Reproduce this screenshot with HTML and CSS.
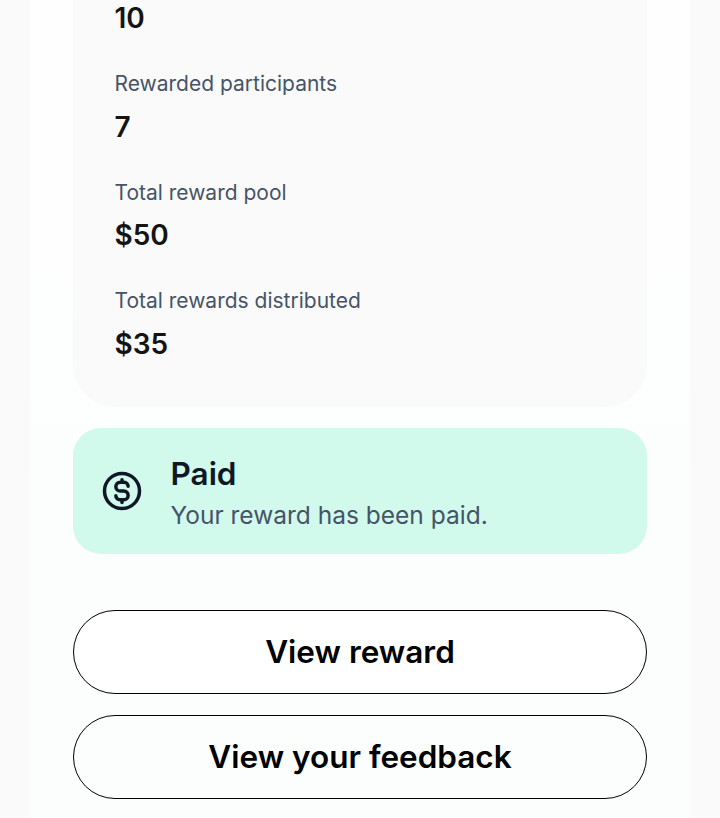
FILE: index.html
```html
<!DOCTYPE html>
<html lang="en">
<head>
  <meta charset="UTF-8">
  <meta name="viewport" content="width=device-width, initial-scale=1">
  <title>Reward</title>
  <link rel="stylesheet" href="styles.css">
</head>
<body>
  <main class="page">
    <section class="summary">
      <div class="stat">
        <strong class="stat-value">10</strong>
      </div>
      <div class="stat">
        <span class="stat-label">Rewarded participants</span>
        <strong class="stat-value">7</strong>
      </div>
      <div class="stat">
        <span class="stat-label">Total reward pool</span>
        <strong class="stat-value">$50</strong>
      </div>
      <div class="stat">
        <span class="stat-label">Total rewards distributed</span>
        <strong class="stat-value">$35</strong>
      </div>
    </section>

    <section class="notice">
      <svg class="notice-icon" viewBox="0 0 24 24" fill="none" stroke="currentColor" stroke-width="2" stroke-linecap="round" stroke-linejoin="round">
        <circle cx="12" cy="12" r="10"/>
        <path d="M8.5 14.67A2.33 2.33 0 0 0 10.83 17H13a2.5 2.5 0 0 0 0-5h-2a2.5 2.5 0 0 1 0-5h2.17a2.33 2.33 0 0 1 2.33 2.33M12 5.5V7M12 17v1.5"/>
      </svg>
      <div>
        <h2 class="notice-title">Paid</h2>
        <p class="notice-text">Your reward has been paid.</p>
      </div>
    </section>

    <div class="actions">
      <button class="btn btn-white">View reward</button>
      <button class="btn">View your feedback</button>
    </div>
  </main>
</body>
</html>
```
FILE: styles.css
```css
* {box-sizing: border-box;}

body {
	margin: 0;
	height: 818px;
	overflow: hidden;
	background: #fafafa;
	font-family: Inter, "Liberation Sans", sans-serif;
}

.page {
	display: flow-root;
	width: 660px;
	height: 818px;
	margin: 0 auto;
	padding: 0 43px;
	background: linear-gradient(#fefefe, #fbfefd);
}

.summary {
	display: flex;
	flex-direction: column;
	gap: 31px;
	margin-top: -3px;
	padding: 0 41.5px 42px;
	background: #fafafa;
	border-radius: 0 0 42px 42px;
}

.stat {
	display: flex;
	flex-direction: column;
	gap: 7.5px;
}

.stat-label {
	color: #475467;
	font-size: 21px;
	line-height: 28px;
}

.stat-value {
	color: #141414;
	font-size: 28px;
	font-weight: 600;
	line-height: 42px;
}

.notice {
	display: flex;
	align-items: center;
	gap: 27.5px;
	height: 126px;
	margin-top: 21.5px;
	padding: 0 28px;
	background: #d1faec;
	border-radius: 28px;
}

.notice-icon {
	width: 42px;
	height: 42px;
	color: #101828;
}

.notice-title {
	margin: 0;
	color: #101828;
	font-size: 31.5px;
	font-weight: 600;
	line-height: 49px;
}

.notice-text {
	margin: 0;
	color: #475467;
	font-size: 24.5px;
	line-height: 35px;
}

.actions {
	display: flex;
	flex-direction: column;
	gap: 21px;
	margin-top: 55.5px;
}

.btn {
	height: 84px;
	padding: 0;
	border: 1px solid #000;
	border-radius: 42px;
	background: transparent;
	color: #000;
	font-family: inherit;
	font-size: 31.5px;
	font-weight: 600;
	cursor: pointer;
}

.btn-white {background: #fff;}
```
